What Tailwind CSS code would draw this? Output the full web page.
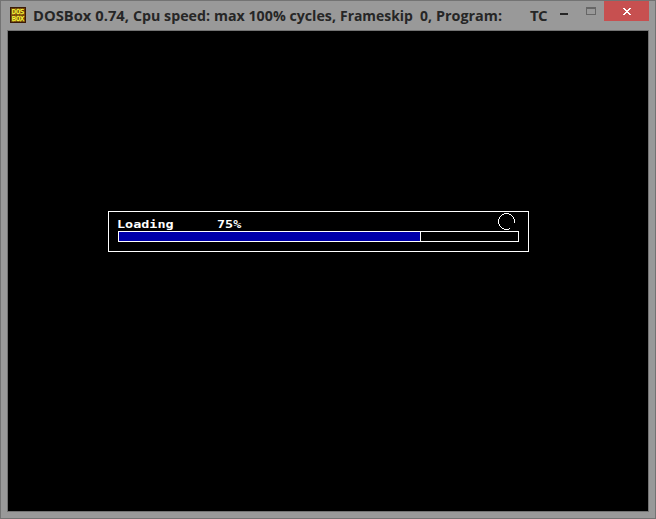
<!DOCTYPE html>
<html lang="en"><head><meta charset="utf-8"><title>DOSBox</title>
<script src="https://cdn.jsdelivr.net/npm/@tailwindcss/browser@4"></script></head>
<body class="h-[519px] w-[656px] overflow-hidden bg-[#999999]">
<main class="flex h-[519px] w-[656px] flex-col border border-[#737373] px-[6px] pb-[6px]">
<header class="flex h-[29px] shrink-0 items-start">
<svg class="mt-[6px] ml-[3px] shrink-0" width="16" height="16" viewBox="0 0 16 16">
<rect width="16" height="16" fill="#3a1a08"/><rect x="1" y="1" width="14" height="14" fill="#6e4208"/><path d="M1 8h14M5.5 1v14M10.5 1v14" stroke="#8f5a10" stroke-width=".8"/>
<g font-family="DejaVu Sans Mono, monospace" font-size="6.8" fill="#ffff40" stroke="#ffff40" stroke-width=".25"><text x="1.7" y="6.6" textLength="12.6" lengthAdjust="spacingAndGlyphs">DOS</text><text x="1.7" y="14" textLength="12.6" lengthAdjust="spacingAndGlyphs">BOX</text></g>
</svg>
<h1 class="mt-[4px] ml-[7px] w-[497px] shrink-0"><svg class="font-['Open_Sans',sans-serif] text-[15px] font-bold" width="497" height="22" viewBox="0 0 497 22" fill="#262626">
<text x="0" y="16" textLength="96" lengthAdjust="spacingAndGlyphs">DOSBox 0.74,</text>
<text x="100" y="16" textLength="77" lengthAdjust="spacingAndGlyphs">Cpu speed:</text>
<text x="181" y="16" textLength="122" lengthAdjust="spacingAndGlyphs">max 100% cycles,</text>
<text class="whitespace-pre" x="307" y="16" textLength="92" lengthAdjust="spacingAndGlyphs">Frameskip  0,</text>
<text x="403" y="16" textLength="66" lengthAdjust="spacingAndGlyphs">Program:</text></svg></h1>
<span class="mt-[4px] w-[26px] shrink-0 font-['Open_Sans',sans-serif] text-[15px] leading-[20px] font-bold tracking-[-0.8px] text-[#262626]">TC</span>
<div class="mt-[12px] ml-[4px] h-[2px] w-[8px] shrink-0 bg-[#262626]"></div>
<div class="mt-[6px] ml-[18px] h-[8px] w-[10px] shrink-0 border border-t-2 border-[#666666]"></div>
<div class="ml-[8px] flex h-[20px] w-[45px] shrink-0 items-center justify-center bg-[#c75050]">
<svg width="8" height="7" viewBox="0 0 8 7" shape-rendering="crispEdges" fill="#fff"><path d="M0 0h2v1h1v1h2v-1h1v-1h2v1h-1v1h-1v1h-1v1h1v1h1v1h1v1h-2v-1h-1v-1h-2v1h-1v1h-2v-1h1v-1h1v-1h1v-1h-1v-1h-1v-1h-1z"/></svg></div>
</header>
<section class="flex h-[482px] w-[642px] shrink-0 flex-col border border-[#737373] bg-black pt-[180px] pl-[100px]">
<div class="h-[41px] w-[421px] border border-white pl-[9px]">
<div class="flex h-[19px] font-['DejaVu_Sans_Mono',monospace] text-[9.6px] leading-[10px] font-bold text-white">
<span class="-ml-px w-[100px] pt-[8px]"><span class="inline-block origin-left scale-x-[1.4]">Loading</span></span>
<span class="mr-px w-[280px] pt-[8px]"><span class="inline-block origin-left scale-x-[1.4]">75%</span></span>
<svg class="mt-px" width="17" height="17" viewBox="0 0 17 17" shape-rendering="crispEdges"><path d="M16.5 9.5V8.5A8 8 0 1 0 12 15.7" fill="none" stroke="#fff"/></svg>
</div>
<div class="h-[11px] w-[401px] border border-white"><div class="h-[9px] w-[302px] border-r border-white bg-[#0000aa]"></div></div>
</div></section></main></body></html>
